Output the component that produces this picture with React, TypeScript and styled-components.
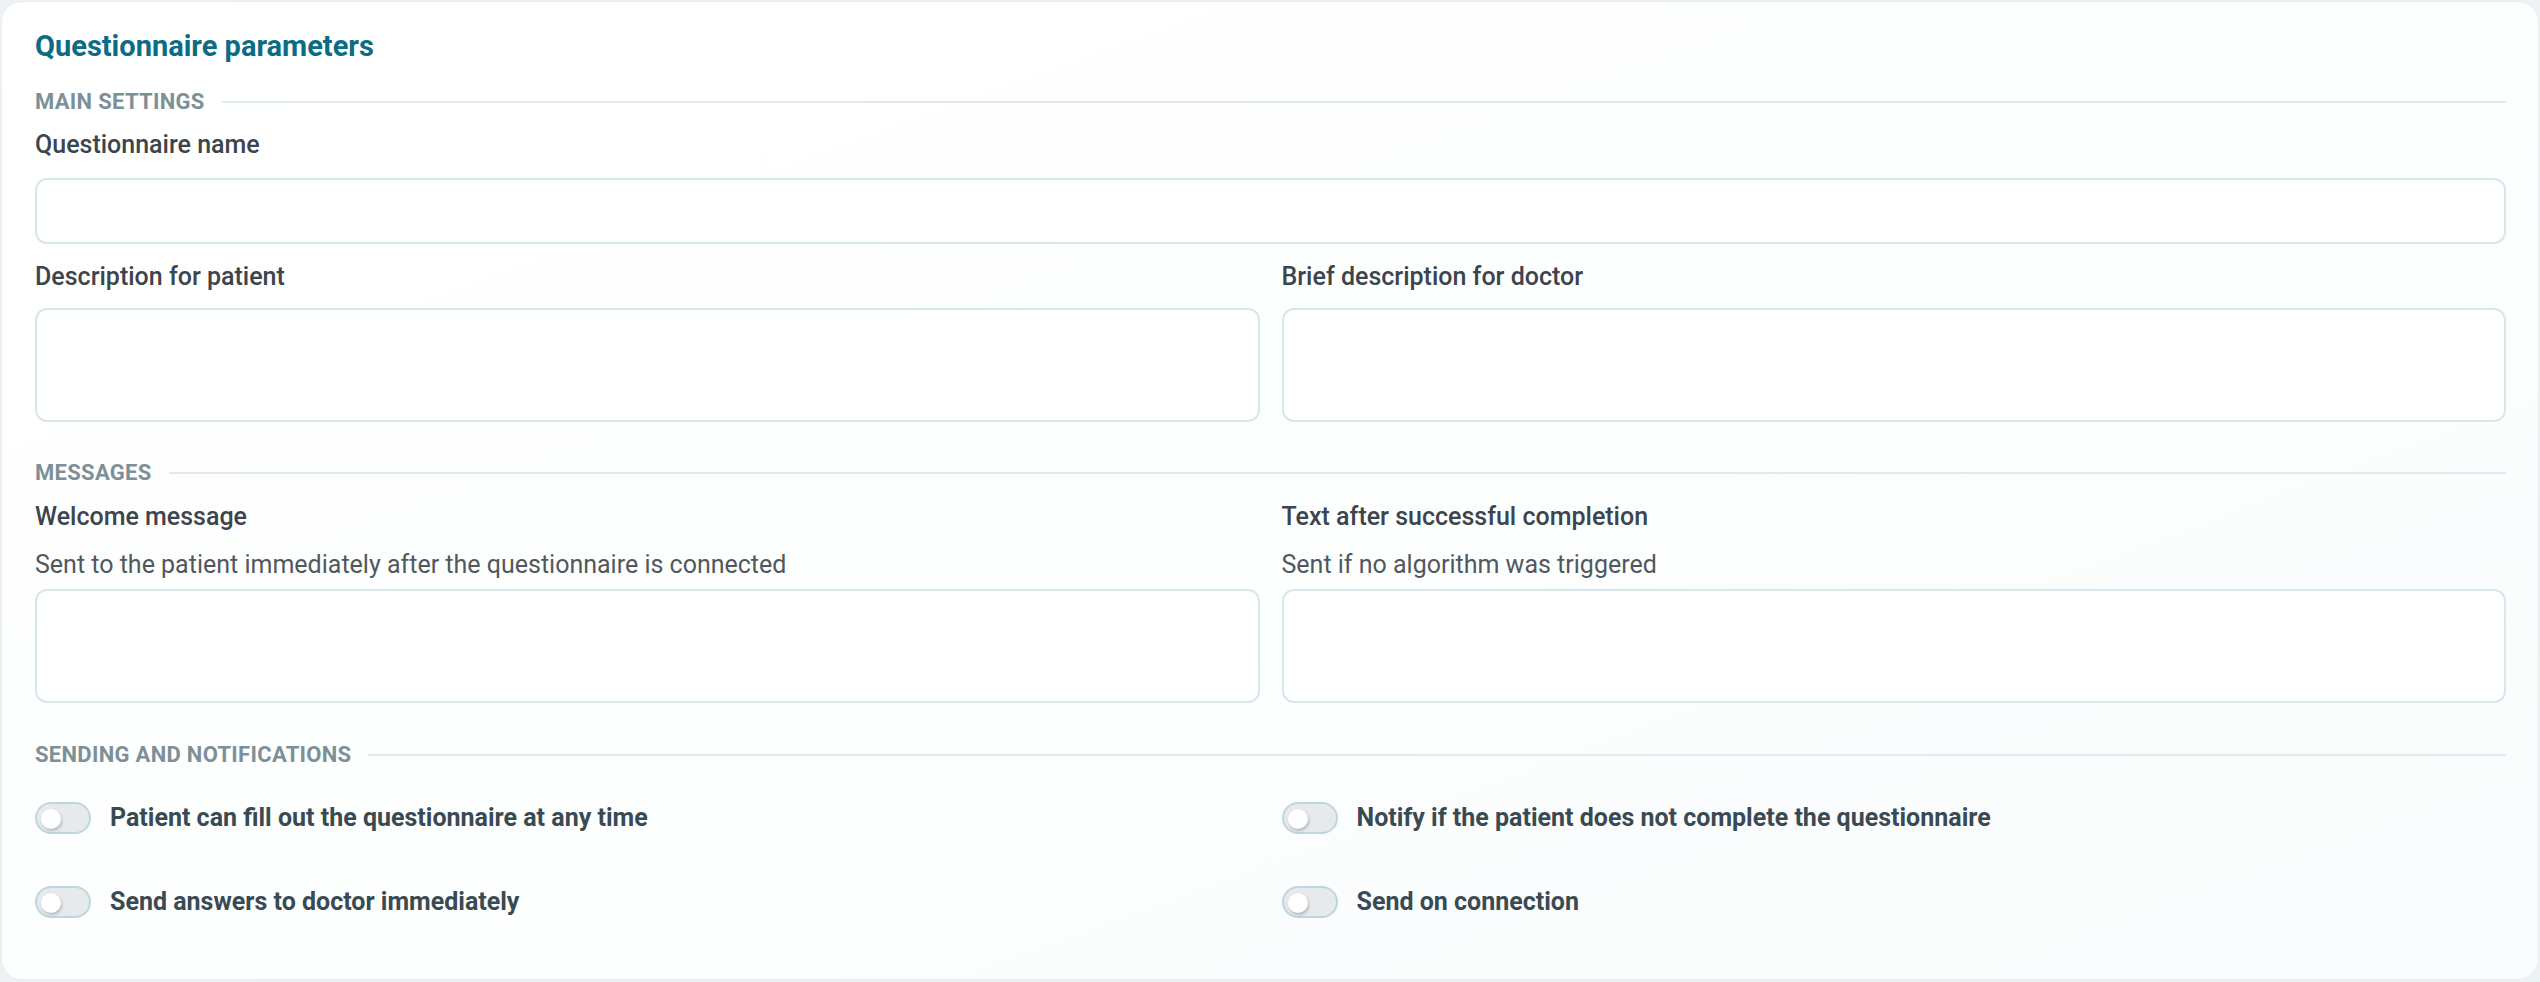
import React from "react";
import styled, { createGlobalStyle } from "styled-components";

const Global = createGlobalStyle`
  html, body { margin: 0; padding: 0; }
  body {
    background: #edf3f5;
    font-family: Roboto, "Noto Sans", "Liberation Sans", sans-serif;
    -webkit-font-smoothing: antialiased;
  }
  * { box-sizing: border-box; }
`;

const Page = styled.div`
  padding: 2px;
  height: 982px;
`;

const Card = styled.section`
  height: 977px;
  background: linear-gradient(160deg, #ffffff 0%, #fdfefe 55%, #f9fbfc 100%);
  border-radius: 20px;
  box-shadow: 0 0 0 1px #e6eef1;
  padding: 27px 32px 0 33px;
  display: flex;
  flex-direction: column;
`;

const Title = styled.h2`
  margin: 0 0 26px;
  font-size: 29px;
  line-height: 34px;
  font-weight: 700;
  color: #0c6c85;
`;

const SectionHead = styled.div<{ $top?: number; $bottom?: number }>`
  display: flex;
  align-items: center;
  gap: 17px;
  margin-top: ${(p) => p.$top ?? 0}px;
  margin-bottom: ${(p) => p.$bottom ?? 16}px;
  font-size: 22px;
  line-height: 26px;
  font-weight: 700;
  letter-spacing: 0.3px;
  color: #7d9098;
  text-transform: uppercase;
  white-space: nowrap;
  &::after {
    content: "";
    flex: 1;
    height: 2px;
    background: #dfebf0;
  }
`;

const Label = styled.div<{ $bottom?: number }>`
  font-size: 25px;
  line-height: 28px;
  font-weight: 500;
  color: #3c454d;
  margin-bottom: ${(p) => p.$bottom ?? 18}px;
`;

const Hint = styled.div`
  font-size: 25px;
  line-height: 28px;
  font-weight: 400;
  color: #51585d;
  margin-bottom: 10px;
`;

const TextInput = styled.input`
  display: block;
  width: 100%;
  height: 66px;
  border: 2px solid #d8e7ed;
  border-radius: 12px;
  background: #fff;
  font: inherit;
  outline: none;
`;

const TextArea = styled.textarea`
  display: block;
  width: 100%;
  height: 114px;
  border: 2px solid #d8e7ed;
  border-radius: 12px;
  background: #fff;
  resize: none;
  font: inherit;
  outline: none;
`;

const Field = styled.div<{ $bottom?: number }>`
  display: flex;
  flex-direction: column;
  margin-bottom: ${(p) => p.$bottom ?? 0}px;
`;

const TwoCols = styled.div<{ $bottom?: number; $rowGap?: number }>`
  display: grid;
  grid-template-columns: 1fr 1fr;
  column-gap: 22px;
  row-gap: ${(p) => p.$rowGap ?? 0}px;
  margin-bottom: ${(p) => p.$bottom ?? 0}px;
`;

const ToggleRow = styled.label`
  display: flex;
  align-items: center;
  gap: 19px;
  height: 52px;
  cursor: pointer;
`;

const Track = styled.span<{ $on?: boolean }>`
  position: relative;
  flex: 0 0 auto;
  width: 56px;
  height: 32px;
  border-radius: 16px;
  background: ${(p) => (p.$on ? "#0c6c85" : "#e6eaed")};
  border: 2px solid #bed7df;
`;

const Knob = styled.span<{ $on?: boolean }>`
  position: absolute;
  top: 5px;
  left: ${(p) => (p.$on ? 30 : 4)}px;
  width: 20px;
  height: 20px;
  border-radius: 50%;
  background: #fff;
  box-shadow: 1px 2px 3px rgba(40, 60, 70, 0.28);
`;

const ToggleText = styled.span`
  font-size: 25px;
  line-height: 28px;
  font-weight: 700;
  color: #3a4a52;
`;

function Toggle({ label }: { label: string }) {
  const [on, setOn] = React.useState(false);
  return (
    <ToggleRow onClick={() => setOn((v) => !v)}>
      <Track $on={on}>
        <Knob $on={on} />
      </Track>
      <ToggleText>{label}</ToggleText>
    </ToggleRow>
  );
}

export default function App() {
  return (
    <>
      <Global />
      <Page>
        <Card>
          <Title>Questionnaire parameters</Title>

          <SectionHead>Main settings</SectionHead>
          <Field $bottom={19}>
            <Label $bottom={19}>Questionnaire name</Label>
            <TextInput />
          </Field>
          <TwoCols>
            <Field>
              <Label $bottom={17}>Description for patient</Label>
              <TextArea />
            </Field>
            <Field>
              <Label $bottom={17}>Brief description for doctor</Label>
              <TextArea />
            </Field>
          </TwoCols>

          <SectionHead $top={38} $bottom={17}>Messages</SectionHead>
          <TwoCols>
            <Field>
              <Label $bottom={20}>Welcome message</Label>
              <Hint>Sent to the patient immediately after the questionnaire is connected</Hint>
              <TextArea />
            </Field>
            <Field>
              <Label $bottom={20}>Text after successful completion</Label>
              <Hint>Sent if no algorithm was triggered</Hint>
              <TextArea />
            </Field>
          </TwoCols>

          <SectionHead $top={39} $bottom={24}>Sending and notifications</SectionHead>
          <TwoCols $rowGap={32}>
            <Toggle label="Patient can fill out the questionnaire at any time" />
            <Toggle label="Notify if the patient does not complete the questionnaire" />
            <Toggle label="Send answers to doctor immediately" />
            <Toggle label="Send on connection" />
          </TwoCols>
        </Card>
      </Page>
    </>
  );
}
